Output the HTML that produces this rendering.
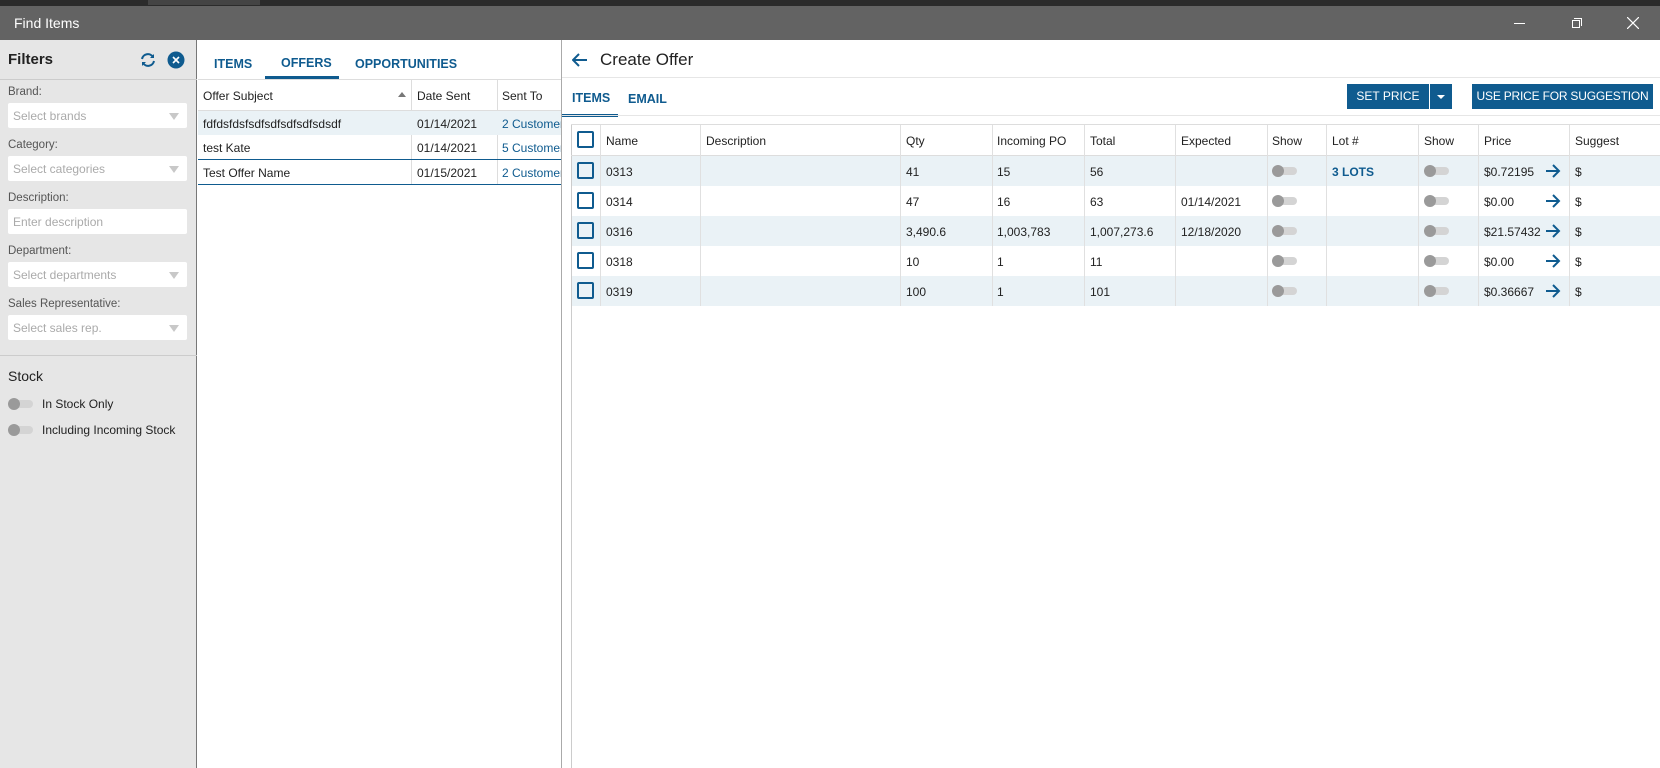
<!DOCTYPE html>
<html><head><meta charset="utf-8"><style>
*{box-sizing:border-box;margin:0;padding:0}
body{width:1660px;height:768px;overflow:hidden;background:#fff;font-family:"Liberation Sans",sans-serif;font-size:12px;color:#222;position:relative}
.a{position:absolute}
.lbl{position:absolute;left:8px;color:#555;font-size:11.5px}
.inp{position:absolute;left:8px;width:179px;height:25px;background:#fff;border-radius:2px;color:#aaa;padding:6px 5px;font-size:12px}
.inp .tri{position:absolute;right:8px;top:10px;width:0;height:0;border-left:5px solid transparent;border-right:5px solid transparent;border-top:7px solid #c8c8c8}
.tog{position:absolute;width:24px;height:8px;background:#d4d4d4;border-radius:4px}
.tog::before{content:"";position:absolute;left:-1px;top:-2px;width:12px;height:12px;border-radius:6px;background:#9a9a9a}
.tab{position:absolute;color:#0f5b8f;font-weight:bold;font-size:12.5px}
.cb{position:absolute;width:17px;height:17px;border:2px solid #0f5b8f;border-radius:2px;background:transparent}
.arr{position:absolute}
.btn{position:absolute;background:#0f5b8f;color:#fff;text-align:center;line-height:25px;font-size:12px;white-space:nowrap;height:25px}
</style></head><body>
<div class="a" style="left:0;top:0;width:1660px;height:6px;background:#2b2b2b"></div>
<div class="a" style="left:148px;top:0;width:112px;height:5px;background:#444"></div>
<div class="a" style="left:0;top:6px;width:1660px;height:34px;background:#636363"></div>
<div class="a" style="left:14px;top:15px;color:#fff;font-size:14px">Find Items</div>
<div class="a" style="left:1514px;top:23px;width:11px;height:1px;background:#fff"></div>
<div class="a" style="left:1572px;top:20px;width:8px;height:8px;border:1px solid #fff"></div>
<div class="a" style="left:1574px;top:18px;width:8px;height:8px;border-top:1px solid #fff;border-right:1px solid #fff"></div>
<svg class="a" style="left:1627px;top:17px" width="12" height="12"><path d="M0 0L12 12M12 0L0 12" stroke="#fff" stroke-width="1.2"/></svg>

<!-- left panel -->
<div class="a" style="left:0;top:40px;width:197px;height:728px;background:#e6e6e6;border-right:1px solid #777"></div>
<div class="a" style="left:8px;top:51px;font-weight:bold;font-size:15px">Filters</div>
<svg class="a" style="left:139px;top:51px" width="18" height="18" viewBox="0 0 18 18"><path d="M3 8a6 6 0 0 1 11-2M15 10a6 6 0 0 1-11 2" stroke="#0f5b8f" stroke-width="2" fill="none"/><path d="M15 3v4h-4z M3 15v-4h4z" fill="#0f5b8f"/></svg>
<svg class="a" style="left:167px;top:51px" width="18" height="18"><circle cx="9" cy="9" r="8.5" fill="#0f5b8f"/><path d="M6 6l6 6M12 6l-6 6" stroke="#fff" stroke-width="1.6"/></svg>
<div class="a" style="left:0;top:79px;width:197px;height:1px;background:#ccc"></div>
<div class="lbl" style="top:86px">Brand:</div>
<div class="inp" style="top:103px">Select brands<span class="tri"></span></div>
<div class="lbl" style="top:139px">Category:</div>
<div class="inp" style="top:156px">Select categories<span class="tri"></span></div>
<div class="lbl" style="top:192px">Description:</div>
<div class="inp" style="top:209px">Enter description</div>
<div class="lbl" style="top:245px">Department:</div>
<div class="inp" style="top:262px">Select departments<span class="tri"></span></div>
<div class="lbl" style="top:298px">Sales Representative:</div>
<div class="inp" style="top:315px">Select sales rep.<span class="tri"></span></div>
<div class="a" style="left:0;top:355px;width:197px;height:1px;background:#ccc"></div>
<div class="a" style="left:8px;top:368px;font-size:14px">Stock</div>
<div class="tog" style="left:9px;top:400px"></div>
<div class="a" style="left:42px;top:397px">In Stock Only</div>
<div class="tog" style="left:9px;top:426px"></div>
<div class="a" style="left:42px;top:423px">Including Incoming Stock</div>

<!-- middle -->
<div class="tab" style="left:214px;top:57px">ITEMS</div>
<div class="tab" style="left:281px;top:56px">OFFERS</div>
<div class="a" style="left:265px;top:76px;width:74px;height:3px;background:#0f5b8f"></div>
<div class="tab" style="left:355px;top:57px">OPPORTUNITIES</div>
<div class="a" style="left:198px;top:79px;width:363px;height:1px;background:#ddd"></div>
<div class="a" style="left:198px;top:110px;width:363px;height:1px;background:#ddd"></div>
<div class="a" style="left:411px;top:80px;width:1px;height:104px;background:#ddd"></div>
<div class="a" style="left:497px;top:80px;width:1px;height:104px;background:#ddd"></div>
<div class="a" style="left:203px;top:89px">Offer Subject</div>
<div class="a" style="left:398px;top:92px;width:0;height:0;border-left:4px solid transparent;border-right:4px solid transparent;border-bottom:5px solid #777"></div>
<div class="a" style="left:417px;top:89px">Date Sent</div>
<div class="a" style="left:502px;top:89px">Sent To</div>
<div class="a" style="left:198px;top:111px;width:363px;height:24px;background:#eaf2f6"></div>
<div class="a" style="left:203px;top:117px">fdfdsfdsfsdfsdfsdfsdfsdsdf</div>
<div class="a" style="left:417px;top:117px">01/14/2021</div>
<div class="a" style="left:502px;top:117px;color:#0f5b8f;white-space:nowrap;width:59px;overflow:hidden">2 Customers</div>
<div class="a" style="left:203px;top:141px">test Kate</div>
<div class="a" style="left:417px;top:141px">01/14/2021</div>
<div class="a" style="left:502px;top:141px;color:#0f5b8f;white-space:nowrap;width:59px;overflow:hidden">5 Customers</div>
<div class="a" style="left:198px;top:159px;width:363px;height:1px;background:#0f5b8f"></div>
<div class="a" style="left:203px;top:166px">Test Offer Name</div>
<div class="a" style="left:417px;top:166px">01/15/2021</div>
<div class="a" style="left:502px;top:166px;color:#0f5b8f;white-space:nowrap;width:59px;overflow:hidden">2 Customers</div>
<div class="a" style="left:198px;top:184px;width:363px;height:1px;background:#0f5b8f"></div>

<!-- right -->
<div class="a" style="left:561px;top:40px;width:1px;height:728px;background:#aaa"></div>
<div class="a" style="left:571px;top:124px;width:1px;height:644px;background:#ccc"></div>
<svg class="a" style="left:572px;top:53px" width="16" height="14"><path d="M1 7H15M7 1L1 7L7 13" stroke="#0f5b8f" stroke-width="2" fill="none"/></svg>
<div class="a" style="left:600px;top:50px;font-size:17px">Create Offer</div>
<div class="a" style="left:562px;top:77px;width:1098px;height:1px;background:#e6e6e6"></div>
<div class="tab" style="left:572px;top:91px">ITEMS</div>
<div class="tab" style="left:628px;top:92px">EMAIL</div>
<div class="a" style="left:562px;top:114px;width:56px;height:3px;background:#0f5b8f"></div>
<div class="a" style="left:562px;top:115px;width:1098px;height:1px;background:#e6e6e6"></div>
<div class="btn" style="left:1347px;top:84px;width:82px">SET PRICE</div>
<div class="btn" style="left:1430px;top:84px;width:22px"><div class="a" style="left:7px;top:11px;border-left:4px solid transparent;border-right:4px solid transparent;border-top:4px solid #fff"></div></div>
<div class="btn" style="left:1472px;top:84px;width:181px;letter-spacing:-0.2px">USE PRICE FOR SUGGESTION</div>

<div class="a" style="left:571px;top:124px;width:1089px;height:1px;background:#ddd"></div>
<div class="a" style="left:571px;top:155px;width:1089px;height:1px;background:#ddd"></div>
<div class="a" style="left:572px;top:156px;width:1088px;height:30px;background:#eaf2f6"></div>
<div class="a" style="left:572px;top:216px;width:1088px;height:30px;background:#eaf2f6"></div>
<div class="a" style="left:572px;top:276px;width:1088px;height:30px;background:#eaf2f6"></div>
<div class="a" style="left:600px;top:125px;width:1px;height:181px;background:#e0e0e0"></div>
<div class="a" style="left:700px;top:125px;width:1px;height:181px;background:#e0e0e0"></div>
<div class="a" style="left:900px;top:125px;width:1px;height:181px;background:#e0e0e0"></div>
<div class="a" style="left:992px;top:125px;width:1px;height:181px;background:#e0e0e0"></div>
<div class="a" style="left:1084px;top:125px;width:1px;height:181px;background:#e0e0e0"></div>
<div class="a" style="left:1175px;top:125px;width:1px;height:181px;background:#e0e0e0"></div>
<div class="a" style="left:1267px;top:125px;width:1px;height:181px;background:#e0e0e0"></div>
<div class="a" style="left:1326px;top:125px;width:1px;height:181px;background:#e0e0e0"></div>
<div class="a" style="left:1418px;top:125px;width:1px;height:181px;background:#e0e0e0"></div>
<div class="a" style="left:1478px;top:125px;width:1px;height:181px;background:#e0e0e0"></div>
<div class="a" style="left:1569px;top:125px;width:1px;height:181px;background:#e0e0e0"></div>

<div class="cb" style="left:577px;top:131px"></div>
<div class="a" style="left:606px;top:134px">Name</div>
<div class="a" style="left:706px;top:134px">Description</div>
<div class="a" style="left:906px;top:134px">Qty</div>
<div class="a" style="left:997px;top:134px">Incoming PO</div>
<div class="a" style="left:1090px;top:134px">Total</div>
<div class="a" style="left:1181px;top:134px">Expected</div>
<div class="a" style="left:1272px;top:134px">Show</div>
<div class="a" style="left:1332px;top:134px">Lot #</div>
<div class="a" style="left:1424px;top:134px">Show</div>
<div class="a" style="left:1484px;top:134px">Price</div>
<div class="a" style="left:1575px;top:134px">Suggest</div>

<!-- rows -->
<div class="cb" style="left:577px;top:162px"></div><div class="a" style="left:606px;top:165px">0313</div><div class="a" style="left:906px;top:165px">41</div><div class="a" style="left:997px;top:165px">15</div><div class="a" style="left:1090px;top:165px">56</div><div class="tog" style="left:1273px;top:167px"></div><div class="a" style="left:1332px;top:165px;color:#0f5b8f;font-weight:bold">3 LOTS</div><div class="tog" style="left:1425px;top:167px"></div><div class="a" style="left:1484px;top:165px">$0.72195</div><svg class="arr" style="left:1546px;top:164px" width="15" height="14"><path d="M0 7H13M7 1L13 7L7 13" stroke="#0f5b8f" stroke-width="2" fill="none"/></svg><div class="a" style="left:1575px;top:165px">$</div>

<div class="cb" style="left:577px;top:192px"></div><div class="a" style="left:606px;top:195px">0314</div><div class="a" style="left:906px;top:195px">47</div><div class="a" style="left:997px;top:195px">16</div><div class="a" style="left:1090px;top:195px">63</div><div class="a" style="left:1181px;top:195px">01/14/2021</div><div class="tog" style="left:1273px;top:197px"></div><div class="tog" style="left:1425px;top:197px"></div><div class="a" style="left:1484px;top:195px">$0.00</div><svg class="arr" style="left:1546px;top:194px" width="15" height="14"><path d="M0 7H13M7 1L13 7L7 13" stroke="#0f5b8f" stroke-width="2" fill="none"/></svg><div class="a" style="left:1575px;top:195px">$</div>

<div class="cb" style="left:577px;top:222px"></div><div class="a" style="left:606px;top:225px">0316</div><div class="a" style="left:906px;top:225px">3,490.6</div><div class="a" style="left:997px;top:225px">1,003,783</div><div class="a" style="left:1090px;top:225px">1,007,273.6</div><div class="a" style="left:1181px;top:225px">12/18/2020</div><div class="tog" style="left:1273px;top:227px"></div><div class="tog" style="left:1425px;top:227px"></div><div class="a" style="left:1484px;top:225px">$21.57432</div><svg class="arr" style="left:1546px;top:224px" width="15" height="14"><path d="M0 7H13M7 1L13 7L7 13" stroke="#0f5b8f" stroke-width="2" fill="none"/></svg><div class="a" style="left:1575px;top:225px">$</div>

<div class="cb" style="left:577px;top:252px"></div><div class="a" style="left:606px;top:255px">0318</div><div class="a" style="left:906px;top:255px">10</div><div class="a" style="left:997px;top:255px">1</div><div class="a" style="left:1090px;top:255px">11</div><div class="tog" style="left:1273px;top:257px"></div><div class="tog" style="left:1425px;top:257px"></div><div class="a" style="left:1484px;top:255px">$0.00</div><svg class="arr" style="left:1546px;top:254px" width="15" height="14"><path d="M0 7H13M7 1L13 7L7 13" stroke="#0f5b8f" stroke-width="2" fill="none"/></svg><div class="a" style="left:1575px;top:255px">$</div>

<div class="cb" style="left:577px;top:282px"></div><div class="a" style="left:606px;top:285px">0319</div><div class="a" style="left:906px;top:285px">100</div><div class="a" style="left:997px;top:285px">1</div><div class="a" style="left:1090px;top:285px">101</div><div class="tog" style="left:1273px;top:287px"></div><div class="tog" style="left:1425px;top:287px"></div><div class="a" style="left:1484px;top:285px">$0.36667</div><svg class="arr" style="left:1546px;top:284px" width="15" height="14"><path d="M0 7H13M7 1L13 7L7 13" stroke="#0f5b8f" stroke-width="2" fill="none"/></svg><div class="a" style="left:1575px;top:285px">$</div>
</body></html>
